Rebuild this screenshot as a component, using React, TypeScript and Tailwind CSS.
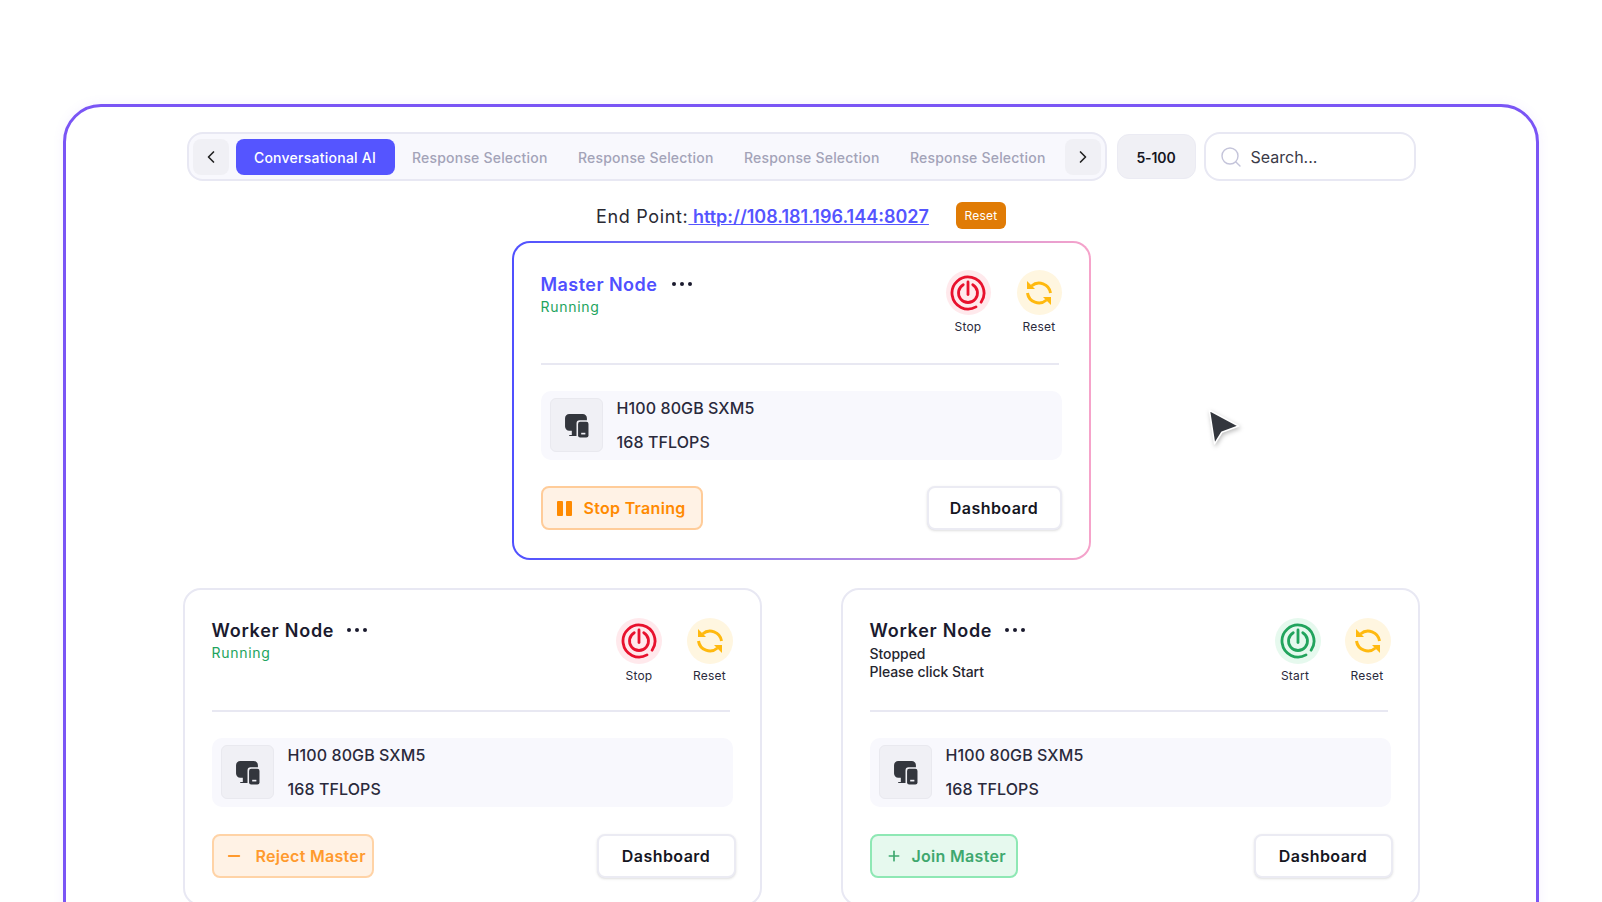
import { ChevronLeft, ChevronRight, Minus, Plus, Search } from "lucide-react";

const PowerIcon = ({ color }: { color: string }) => (
  <svg viewBox="0 0 36 36" className="w-9 h-9" fill="none" stroke={color} strokeWidth="2.8" strokeLinecap="round">
    <path d="M26 31.86A16 16 0 1 1 31.1 27.2" />
    <path d="M22.75 9.77A9.5 9.5 0 1 1 13.25 9.77" />
    <path d="M18 7V19.5" />
  </svg>
);

const ResetIcon = () => (
  <svg viewBox="0 0 30 30" className="w-[30px] h-[30px]" fill="none" stroke="#ffb90f" strokeWidth="3">
    <path d="M7.5 8A11.5 11.5 0 0 1 26.5 15" />
    <path d="M3.5 15A11.5 11.5 0 0 0 22.5 22" />
    <path d="M3 3V11H11Z" fill="#ffb90f" stroke="none" />
    <path d="M27 27V19H19Z" fill="#ffb90f" stroke="none" />
  </svg>
);

const DeviceIcon = () => (
  <svg viewBox="0 0 24 24" className="w-[25px] h-[25px]">
    <path
      d="M5 1H18A4 4 0 0 1 22 5V7H15A3 3 0 0 0 12 10V22H5V21H7.5V17H5A4 4 0 0 1 1 13V5A4 4 0 0 1 5 1Z"
      fill="#33363d"
    />
    <rect x="13.5" y="8.5" width="10" height="15" rx="2" fill="#33363d" />
    <rect x="16.5" y="19" width="4" height="1.6" fill="#f0f0f5" />
  </svg>
);

const Dots = () => (
  <div className="flex gap-1">
    <div className="w-1 h-1 rounded-full bg-[#1a1a2e]" />
    <div className="w-1 h-1 rounded-full bg-[#1a1a2e]" />
    <div className="w-1 h-1 rounded-full bg-[#1a1a2e]" />
  </div>
);

const RoundAction = ({ bg, icon, label, size, labelClass }: { bg: string; icon: React.ReactNode; label: string; size: string; labelClass: string }) => (
  <div className="flex flex-col items-center">
    <div className={`${bg} ${size} rounded-full flex items-center justify-center`}>{icon}</div>
    <span className={`mt-1 text-[12px] leading-4 tracking-[0.2px] text-[#2a2a3c] ${labelClass}`}>{label}</span>
  </div>
);

const SpecBox = () => (
  <div className="mt-[26px] h-[69px] rounded-[10px] bg-[#f8f8fd] pl-[9px] pt-[7px] flex gap-[14px]">
    <div className="w-[53px] h-[54px] rounded-md bg-[#f0f0f5] border border-[#e9e9ef] flex items-center justify-center">
      <DeviceIcon />
    </div>
    <div className="flex flex-col gap-[14px] text-[16px] leading-5 font-medium tracking-[0.1px] text-[#2a2a3c]">
      <span>H100 80GB SXM5</span>
      <span>168 TFLOPS</span>
    </div>
  </div>
);

const DashboardButton = ({ className }: { className: string }) => (
  <button className={`h-[44px] rounded-lg border-2 border-[#ebebf3] bg-white shadow-sm text-[16px] font-semibold tracking-[0.45px] text-[#16161f] ${className}`}>
    Dashboard
  </button>
);

const Tab = ({ active }: { active?: boolean }) =>
  active ? (
    <div className="w-[159px] h-[36px] pt-px rounded-lg bg-[#5555ff] text-white text-[14px] font-medium tracking-[0.25px] flex items-center justify-center">
      Conversational AI
    </div>
  ) : (
    <div className="w-[134px] pt-px text-center text-[14px] font-medium tracking-[0.2px] text-[#a3a3b8] whitespace-nowrap">Response Selection</div>
  );

const App = () => {
  return (
    <div className="h-[902px] overflow-hidden bg-white pt-[104px] pl-[63px] font-[Inter,sans-serif]">
      <div className="w-[1476px] h-[900px] rounded-[38px] border-[3px] border-[#7a55f5] pt-[25px] shadow-[0_0_12px_rgba(122,85,245,0.08)]">
        {/* top bar */}
        <div className="flex items-center justify-center">
          <div className="w-[920px] h-[49px] rounded-2xl border-2 border-[#e8e8f3] bg-[#f8f8fd] pl-[4px] flex items-center">
            <button className="w-[36px] h-[36px] rounded-lg bg-[#f0f0f5] flex items-center justify-center">
              <ChevronLeft size={20} color="#222" />
            </button>
            <div className="ml-[7px] mr-[17.5px]">
              <Tab active />
            </div>
            <div className="flex gap-[32px]">
              <Tab />
              <Tab />
              <Tab />
              <Tab />
            </div>
            <button className="ml-[21px] w-[36px] h-[36px] rounded-lg bg-[#f0f0f5] flex items-center justify-center">
              <ChevronRight size={20} color="#222" />
            </button>
          </div>
          <div className="ml-[10px] w-[79px] h-[45px] pt-px rounded-xl bg-[#f0f0f5] border border-[#ebebf3] flex items-center justify-center text-[14px] font-semibold tracking-[-0.1px] text-[#16161f]">
            5-100
          </div>
          <div className="ml-[8px] w-[212px] h-[49px] rounded-2xl border-2 border-[#e8e8f3] bg-white pl-[13px] flex items-center gap-[8px]">
            <Search size={24} color="#c4c4da" strokeWidth={1.4} />
            <span className="text-[16px] text-[#3a3a48]">Search...</span>
          </div>
        </div>

        {/* end point */}
        <div className="mt-[21px] h-[27px] flex items-center justify-center gap-[27px]">
          <p className="pt-[2px] text-[18px] tracking-[0.65px] text-[#2a2a33] whitespace-pre">
            End Point:
            <a className="font-semibold tracking-[0px] text-[#5555ff] underline"> http://108.181.196.144:8027</a>
          </p>
          <button className="w-[50px] h-[27px] rounded-md bg-[#e07b05] text-white text-[12px] tracking-[0.2px]">Reset</button>
        </div>

        {/* master node */}
        <div className="mt-[12px] flex justify-center">
          <div className="w-[579px] h-[319px] rounded-[18px] p-[2px] bg-linear-to-r from-[#5050ff] to-[#f6a3ca]">
            <div className="h-full rounded-2xl bg-white pt-[27px] pl-[27px] pr-[27px]">
              <div className="h-[93px] flex justify-between">
                <div>
                  <div className="flex items-center gap-[15px] h-7">
                    <span className="text-[18px] font-semibold tracking-[0.45px] text-[#5050ff]">Master Node</span>
                    <Dots />
                  </div>
                  <p className="mt-[-1px] text-[14px] leading-5 tracking-[0.7px] text-[#22a45d]">Running</p>
                </div>
                <div className="flex gap-[26px]">
                  <RoundAction bg="bg-[#ffe9ec]" size="w-[45px] h-[45px]" icon={<PowerIcon color="#e8112d" />} label="Stop" labelClass="" />
                  <RoundAction bg="bg-[#fff6e0]" size="w-[45px] h-[45px]" icon={<ResetIcon />} label="Reset" labelClass="" />
                </div>
              </div>
              <div className="h-[2px] mr-[3px] bg-[#e8e8f2]" />
              <SpecBox />
              <div className="mt-[26px] flex justify-between">
                <button className="w-[162px] h-[44px] rounded-lg border-2 border-[#ffcc99] bg-[#fff2e5] pl-[14px] flex items-center gap-[12px] text-[16px] font-semibold tracking-[0.3px] text-[#ff8a00]">
                  <span className="flex gap-[3px]">
                    <span className="w-[6px] h-[15px] rounded-[1px] bg-[#ff8a00]" />
                    <span className="w-[6px] h-[15px] rounded-[1px] bg-[#ff8a00]" />
                  </span>
                  Stop Traning
                </button>
                <DashboardButton className="w-[135px]" />
              </div>
            </div>
          </div>
        </div>

        {/* worker nodes */}
        <div className="mt-[28px] flex justify-center gap-[79px]">
          <div className="w-[579px] h-[318px] rounded-[18px] border-2 border-[#e8e8f3] bg-white pt-[28px] pl-[27px] pr-[27px]">
            <div className="h-[92px] flex justify-between">
              <div className="-mt-[2px]">
                <div className="flex items-center gap-[13px] h-7">
                  <span className="text-[18px] font-semibold tracking-[0.75px] text-[#1a1a2e]">Worker Node</span>
                  <Dots />
                </div>
                <p className="mt-[-1px] text-[14px] leading-5 tracking-[0.7px] text-[#22a45d]">Running</p>
              </div>
              <div className="flex gap-[25px]">
                <RoundAction bg="bg-[#ffe9ec]" size="w-[46px] h-[46px]" icon={<PowerIcon color="#e8112d" />} label="Stop" labelClass="pl-px" />
                <RoundAction bg="bg-[#fff6e0]" size="w-[46px] h-[46px]" icon={<ResetIcon />} label="Reset" labelClass="" />
              </div>
            </div>
            <div className="h-[2px] mr-[3px] bg-[#e8e8f2]" />
            <SpecBox />
            <div className="mt-[27px] flex justify-between">
              <button className="w-[162px] h-[44px] rounded-lg border-2 border-[#ffd3a6] bg-[#fff2e5] pl-[11px] flex items-center gap-[13px] text-[16px] font-semibold tracking-[0.3px] text-[#ff9a2e]">
                <Minus size={18} strokeWidth={2.5} />
                Reject Master
              </button>
              <DashboardButton className="w-[139px] -mr-[3px]" />
            </div>
          </div>

          <div className="w-[579px] h-[318px] rounded-[18px] border-2 border-[#e8e8f3] bg-white pt-[28px] pl-[27px] pr-[27px]">
            <div className="h-[92px] flex justify-between">
              <div className="-mt-[2px]">
                <div className="flex items-center gap-[13px] h-7">
                  <span className="text-[18px] font-semibold tracking-[0.75px] text-[#1a1a2e]">Worker Node</span>
                  <Dots />
                </div>
                <p className="pt-px text-[14px] leading-[18px] font-medium tracking-[-0.05px] text-[#26262f]">
                  Stopped
                  <br />
                  Please click Start
                </p>
              </div>
              <div className="flex gap-[24px]">
                <RoundAction bg="bg-[#e6f9ee]" size="w-[46px] h-[46px]" icon={<PowerIcon color="#22a45d" />} label="Start" labelClass="pr-[5px]" />
                <RoundAction bg="bg-[#fff6e0]" size="w-[46px] h-[46px]" icon={<ResetIcon />} label="Reset" labelClass="pr-px" />
              </div>
            </div>
            <div className="h-[2px] mr-[3px] bg-[#e8e8f2]" />
            <SpecBox />
            <div className="mt-[27px] flex justify-between">
              <button className="w-[148px] h-[44px] rounded-lg border-2 border-[#8ee8b4] bg-[#e6f9ee] pl-[14px] flex items-center gap-[10px] text-[16px] font-semibold tracking-[0.3px] text-[#3fa86f]">
                <Plus size={16} strokeWidth={2.5} />
                Join Master
              </button>
              <DashboardButton className="w-[139px] -mr-[2px]" />
            </div>
          </div>
        </div>
      </div>

      {/* cursor */}
      <svg viewBox="0 0 36 40" className="absolute left-[1205px] top-[406px] w-[38px] h-[42px] drop-shadow-[1px_2px_2px_rgba(0,0,0,0.25)]">
        <path d="M4 4L32 19L16 25L9 36Z" fill="#33363d" stroke="#fff" strokeWidth="1.5" strokeLinejoin="round" />
      </svg>
    </div>
  );
};

export default App;
